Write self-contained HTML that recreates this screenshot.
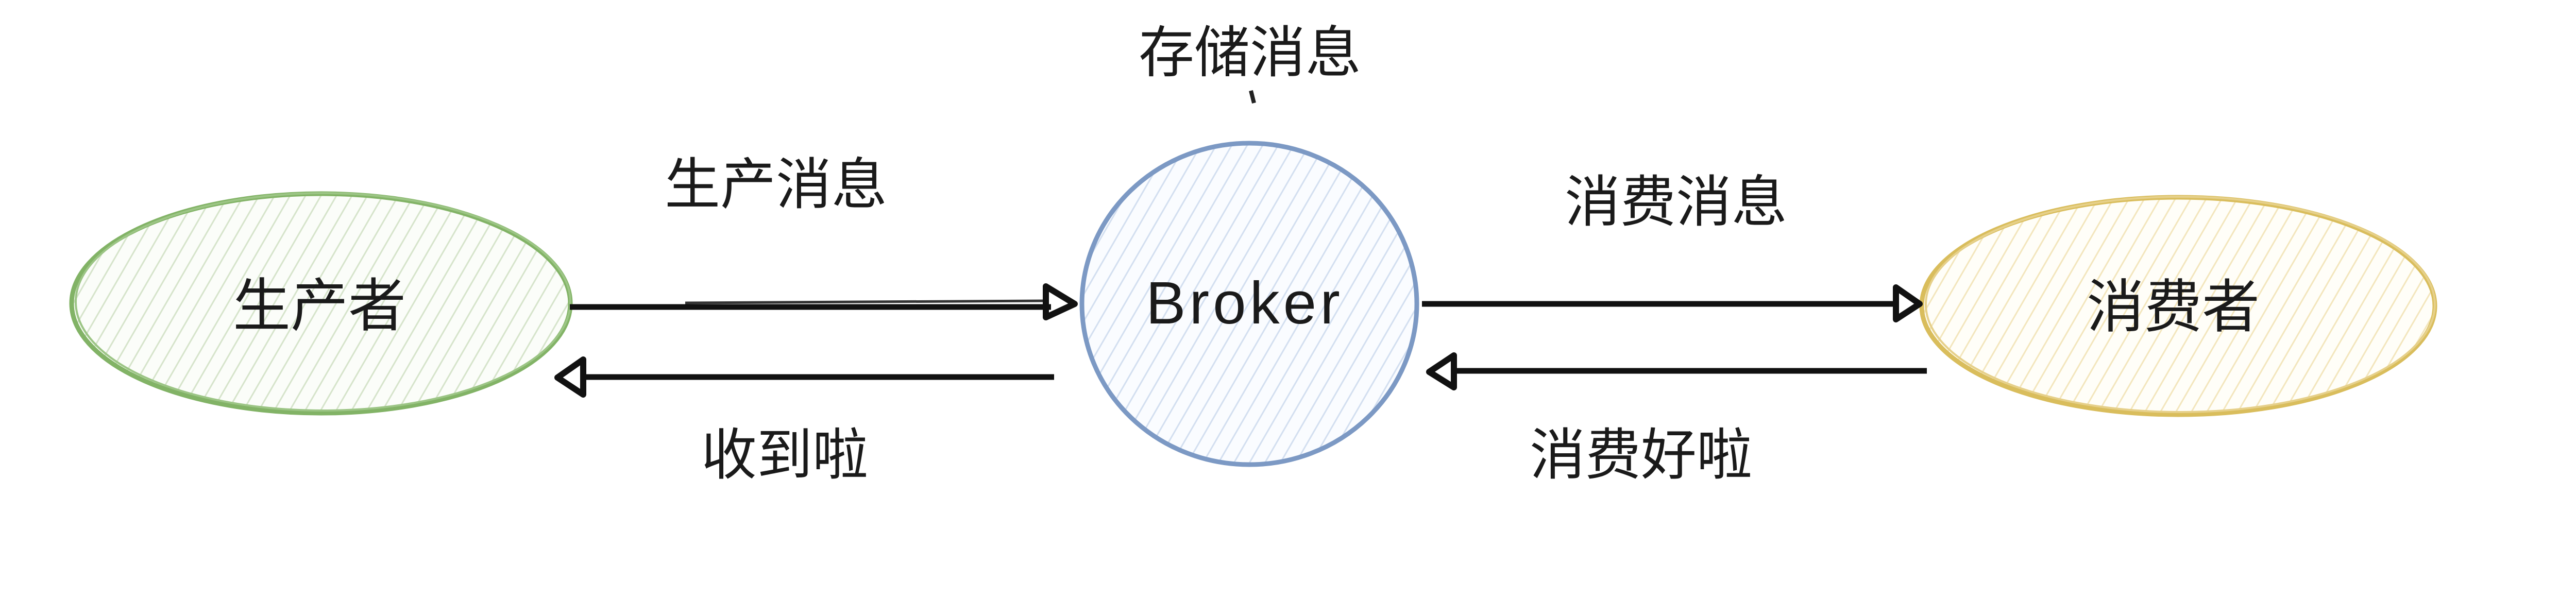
<!DOCTYPE html>
<html><head><meta charset="utf-8"><style>
html,body{margin:0;padding:0;background:#fff;}
svg{display:block;}
text{font-family:"Liberation Sans","Noto Sans CJK SC",sans-serif;fill:#1a1a1a;}
</style></head><body>
<svg width="5120" height="1194" viewBox="0 0 5120 1194" xmlns="http://www.w3.org/2000/svg">
<defs>
<pattern id="hg" width="26" height="26" patternUnits="userSpaceOnUse" patternTransform="rotate(30)">
<rect width="26" height="26" fill="#fbfdf9"/><line x1="0" y1="0" x2="0" y2="26" stroke="#d6e4cb" stroke-width="6"/></pattern>
<pattern id="hb" width="26" height="26" patternUnits="userSpaceOnUse" patternTransform="rotate(30)">
<rect width="26" height="26" fill="#fafcff"/><line x1="0" y1="0" x2="0" y2="26" stroke="#d3dff0" stroke-width="6"/></pattern>
<pattern id="hy" width="26" height="26" patternUnits="userSpaceOnUse" patternTransform="rotate(30)">
<rect width="26" height="26" fill="#fffef8"/><line x1="0" y1="0" x2="0" y2="26" stroke="#f3e6bd" stroke-width="6"/></pattern>
</defs>
<rect width="5120" height="1194" fill="#fff"/>

<!-- Producer -->
<ellipse cx="623" cy="589" rx="484" ry="213" fill="url(#hg)" stroke="#82b366" stroke-width="9"/>
<ellipse cx="627" cy="586" rx="480" ry="211" fill="none" stroke="#9cc585" stroke-width="4"/>
<!-- Broker -->
<ellipse cx="2425" cy="590" rx="325" ry="312" fill="url(#hb)" stroke="#7c99c4" stroke-width="9"/>
<!-- Consumer -->
<ellipse cx="4228" cy="594" rx="498" ry="211" fill="url(#hy)" stroke="#d9bd5c" stroke-width="9"/>
<ellipse cx="4232" cy="591" rx="494" ry="209" fill="none" stroke="#e6d08a" stroke-width="4"/>

<!-- arrows -->
<g stroke="#111" stroke-width="11" fill="none" stroke-linejoin="round">
<line x1="1106" y1="596" x2="2040" y2="596"/>
<line x1="1330" y1="588" x2="2030" y2="584" stroke-width="5" stroke="#333"/>
<path d="M2030 556 L2086 590 L2030 616 Z" stroke-width="12"/>
<line x1="2046" y1="732" x2="1130" y2="732"/>
<path d="M1132 698 L1082 733 L1132 766 Z" stroke-width="12"/>
<line x1="2760" y1="590" x2="3680" y2="590"/>
<path d="M3680 558 L3726 590 L3680 620 Z" stroke-width="12"/>
<line x1="3740" y1="720" x2="2820" y2="720"/>
<path d="M2822 690 L2774 722 L2822 752 Z" stroke-width="12"/>
</g>
<path d="M2428 176 L2434 200" stroke="#222" stroke-width="8"/>

<!-- labels -->
<g font-size="108" dominant-baseline="central" text-anchor="middle">
<text x="2426" y="102">存储消息</text>
<text x="1506" y="358">生产消息</text>
<text x="3253" y="392">消费消息</text>
<text x="1523" y="883">收到啦</text>
<text x="3185" y="883">消费好啦</text>
<text x="620" y="594" font-size="112">生产者</text>
<text x="4218" y="596" font-size="112">消费者</text>
<text x="2416" y="588" font-size="116" letter-spacing="7">Broker</text>
</g>
</svg>
</body></html>
